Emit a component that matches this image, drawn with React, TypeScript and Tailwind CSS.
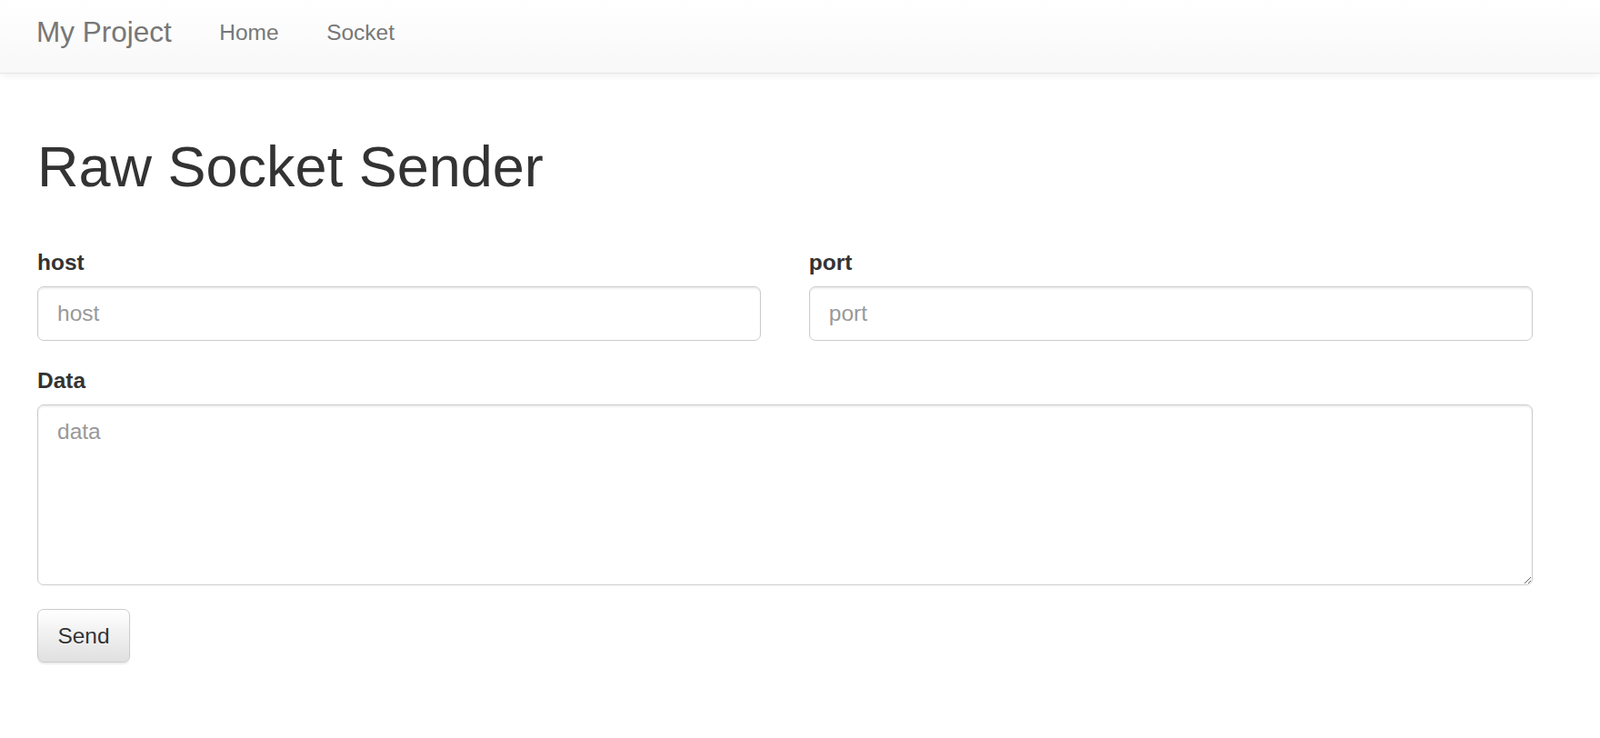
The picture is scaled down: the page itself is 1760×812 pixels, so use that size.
import React from "react";

export default function App() {
  const font = { fontFamily: '"Liberation Sans", Arial, Helvetica, sans-serif' };
  return (
    <div className="min-h-[812px] w-full bg-white text-[#333]" style={font}>
      <nav className="h-[81px] w-full border-b border-[#e7e7e7] bg-gradient-to-b from-white to-[#f8f8f8] shadow-[0_1.75px_8.75px_rgba(0,0,0,0.075)]">
        <div className="flex h-[71px] items-center pl-[40px]">
          <span className="pr-[26.25px] text-[31.5px] leading-[35px] text-[#777]">My Project</span>
          <a className="px-[26.25px] text-[24.5px] leading-[35px] text-[#777]">Home</a>
          <a className="px-[26.25px] text-[24.5px] leading-[35px] text-[#777]">Socket</a>
        </div>
      </nav>

      <div className="ml-[41px] w-[1645px]">
        <h1 className="mt-[68px] text-[63px] font-normal leading-[69.3px] text-[#333]">Raw Socket Sender</h1>

        <div className="mt-[53.2px] grid grid-cols-2 gap-x-[52.5px]">
          <div>
            <label className="mb-[9px] block text-[24.5px] font-bold leading-[35px] text-[#333]">host</label>
            <input
              placeholder="host"
              className="block h-[59.5px] w-full rounded-[7px] border border-[#ccc] bg-white px-[21px] text-[24.5px] text-[#555] shadow-[inset_0_1.75px_1.75px_rgba(0,0,0,0.075)] outline-none placeholder:text-[#999]"
            />
          </div>
          <div>
            <label className="mb-[9px] block text-[24.5px] font-bold leading-[35px] text-[#333]">port</label>
            <input
              placeholder="port"
              className="block h-[59.5px] w-full rounded-[7px] border border-[#ccc] bg-white px-[21px] text-[24.5px] text-[#555] shadow-[inset_0_1.75px_1.75px_rgba(0,0,0,0.075)] outline-none placeholder:text-[#999]"
            />
          </div>
        </div>

        <div className="mt-[26.25px]">
          <label className="mb-[9px] block text-[24.5px] font-bold leading-[35px] text-[#333]">Data</label>
          <textarea
            placeholder="data"
            rows={5}
            className="block h-[198.5px] w-full rounded-[7px] border border-[#ccc] bg-white px-[21px] py-[10.5px] text-[24.5px] leading-[35px] text-[#555] shadow-[inset_0_1.75px_1.75px_rgba(0,0,0,0.075)] outline-none placeholder:text-[#999]"
          />
        </div>

        <button className="mt-[26.25px] h-[59.5px] w-[102px] rounded-[7px] border border-[#ccc] bg-gradient-to-b from-white to-[#e0e0e0] pt-[2px] text-[24.5px] text-[#333] shadow-[0_1.75px_1.75px_rgba(0,0,0,0.075)] [text-shadow:0_1px_0_#fff]">
          Send
        </button>
      </div>
    </div>
  );
}
